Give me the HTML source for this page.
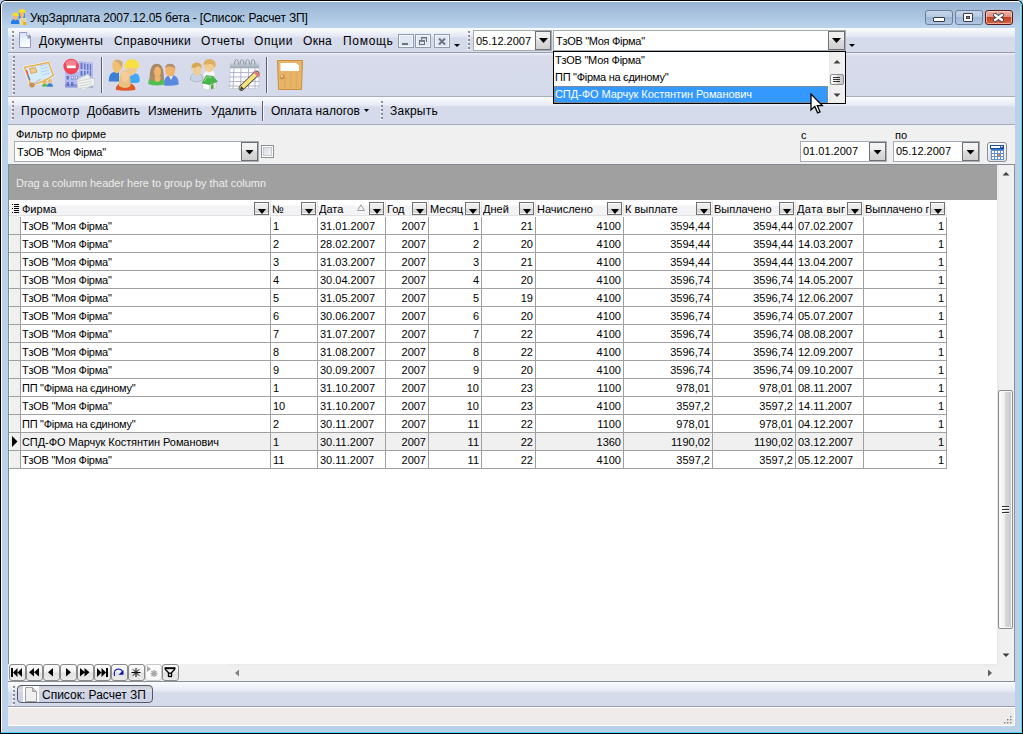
<!DOCTYPE html>
<html><head><meta charset="utf-8">
<style>
*{box-sizing:border-box;margin:0;padding:0}
html,body{width:1023px;height:734px;overflow:hidden}
body{position:relative;background:#b9d1ea;font-family:"Liberation Sans",sans-serif;font-size:11px;color:#000}
.a{position:absolute}
.t{position:absolute;white-space:nowrap;line-height:1}
.m{font-size:12px}
</style></head><body>
<!-- outer frame -->
<div class="a" style="left:0;top:0;width:1023px;height:734px;background:#bad1ea;border-radius:6px 6px 0 0;overflow:hidden"></div>
<div class="a" style="left:2px;top:2px;width:1019px;height:26px;background:linear-gradient(#98b4d4,#bcd4ec)"></div>
<div class="a" style="left:0;top:0;width:1023px;height:734px;border:1px solid #000;border-bottom:none;border-radius:6px 6px 0 0"></div>
<div class="a" style="left:1px;top:1px;width:1021px;height:733px;border:1px solid #fff;border-right:1px solid #48d8f8;border-bottom:none;border-radius:5px 5px 0 0"></div>
<div class="a" style="left:1px;top:732px;width:1021px;height:1px;background:#40d8f8"></div>
<div class="a" style="left:0;top:733px;width:1023px;height:1px;background:#000"></div>
<div class="a" style="left:1020px;top:6px;width:1px;height:726px;background:#c4cee8"></div>
<div class="a" style="left:2px;top:731px;width:1019px;height:1px;background:#c4cee8"></div>
<!-- title -->
<svg class="a" style="left:8px;top:6px" width="22" height="22" viewBox="8 6 22 22">
<path d="M18.5 13.5 Q19 11 21.5 11 Q25 11 25 14 V19 H18.5 Z" fill="#3d8de0"/>
<path d="M19.5 12 Q20 17 22 18.5 Q24.5 17 24.5 12 Z" fill="#f0b878"/>
<path d="M18.5 12.8 Q18.6 9 22 9 Q25.5 9 25.6 13 Q22 11.6 18.5 12.8Z" fill="#f8e020"/>
<path d="M10.8 24 Q10.8 19 15.5 19 Q19.5 19 19.5 24 Z" fill="#1f7ee8"/>
<path d="M13 15.5 Q13.2 19.5 15.5 20.5 Q18 19.5 18.2 15.5 Z" fill="#f2b27a"/>
<path d="M12.4 16 Q12.2 12.6 15.6 12.6 Q19 12.6 19 16.2 Q15.7 14.8 12.4 16Z" fill="#fbe21a"/>
<rect x="20" y="18" width="6" height="7" fill="#eedca0"/>
<path d="M21 20 H25 M21 22 H24" stroke="#c8b070" stroke-width="0.6"/>
<rect x="23" y="22" width="3" height="3" fill="#eab010"/>
</svg>
<div class="t m" style="left:30px;top:12px;color:#000;letter-spacing:-0.14px">УкрЗарплата 2007.12.05 бета - [Список: Расчет ЗП]</div>

<!-- window buttons -->
<div class="a" style="left:925px;top:10px;width:28px;height:15px;border:1px solid #6d7f98;border-radius:3px;background:linear-gradient(#c6d6ea 0%,#b5c9e2 45%,#9fb7d6 50%,#b0c8e4 100%)"></div>
<div class="a" style="left:933px;top:17px;width:12px;height:5px;border:1px solid #3a3a40;border-radius:1px;background:#fff"></div>
<div class="a" style="left:955px;top:10px;width:28px;height:15px;border:1px solid #6d7f98;border-radius:3px;background:linear-gradient(#c6d6ea 0%,#b5c9e2 45%,#9fb7d6 50%,#b0c8e4 100%)"></div>
<div class="a" style="left:963px;top:13px;width:10px;height:9px;border:1px solid #3a3a40;border-radius:1px;background:#fff"></div>
<div class="a" style="left:966px;top:16px;width:4px;height:3px;background:#7a9ac0;border:1px solid #3a3a40"></div>
<div class="a" style="left:985px;top:10px;width:28px;height:15px;border:1px solid #5a1a1a;border-radius:3px;background:linear-gradient(#eeb0a0 0%,#e09080 45%,#c04020 50%,#d86848 100%);box-shadow:inset 0 0 0 1px rgba(255,220,210,0.6)"></div>
<svg class="a" style="left:991px;top:11px" width="15" height="13" viewBox="0 0 15 13"><path d="M4 4 L11 9 M11 4 L4 9" stroke="#3c4150" stroke-width="4" stroke-linecap="round"/><path d="M4 4 L11 9 M11 4 L4 9" stroke="#fafafa" stroke-width="2.3" stroke-linecap="round"/></svg>

<!-- client area background -->
<div class="a" style="left:8px;top:28px;width:1007px;height:698px;background:#f0f0f0"></div>

<!-- menu bar -->
<div class="a" style="left:8px;top:28px;width:1007px;height:24px;background:linear-gradient(#fbfcfe 0px,#e6e9f4 8px,#d6dbec 10px,#d6dbec 24px)"></div>
<div class="a" style="left:8px;top:52px;width:1007px;height:1px;background:#9a9eaa"></div>

<!-- icon toolbar -->
<div class="a" style="left:8px;top:53px;width:1007px;height:44px;background:linear-gradient(#eef0f8 0px,#d7dbec 3px,#d5daeb 44px)"></div>
<div class="a" style="left:8px;top:96px;width:1007px;height:1px;background:#a8adbd"></div>

<!-- text toolbar -->
<div class="a" style="left:8px;top:97px;width:1007px;height:28px;background:linear-gradient(#fbfcfe 0px,#e8ebf5 8px,#d6dbec 10px,#d6dbec 28px)"></div>
<div class="a" style="left:8px;top:124px;width:1007px;height:1px;background:#a8adbd"></div>

<!-- filter panel -->
<div class="a" style="left:8px;top:125px;width:1007px;height:39px;background:#f0f0f0"></div>


<!-- menu bar content -->
<svg class="a" style="left:11px;top:31px" width="3" height="20" viewBox="0 0 3 20"><rect x="1" y="0" width="2" height="2" fill="#8a909a"/><rect x="0" y="2" width="2" height="1" fill="#fff"/><rect x="1" y="4" width="2" height="2" fill="#8a909a"/><rect x="0" y="6" width="2" height="1" fill="#fff"/><rect x="1" y="8" width="2" height="2" fill="#8a909a"/><rect x="0" y="10" width="2" height="1" fill="#fff"/><rect x="1" y="12" width="2" height="2" fill="#8a909a"/><rect x="0" y="14" width="2" height="1" fill="#fff"/><rect x="1" y="16" width="2" height="2" fill="#8a909a"/><rect x="0" y="18" width="2" height="1" fill="#fff"/></svg>
<svg class="a" style="left:18px;top:31px" width="15" height="18" viewBox="0 0 15 18">
<defs><linearGradient id="docg" x1="0" y1="0" x2="0.3" y2="1"><stop offset="0" stop-color="#cfe3fb"/><stop offset="1" stop-color="#ffffff"/></linearGradient></defs>
<path d="M1.5 1.5 H9 L12.5 5 V16.5 H1.5 Z" fill="url(#docg)" stroke="#9a98c0" stroke-width="1"/>
<rect x="9.5" y="5" width="2.6" height="2.5" fill="#90a0a8"/>
<path d="M8.5 1.5 V4.5 H12" fill="#fff" stroke="#9a98c0" stroke-width="0.8"/>
</svg>
<div class="t m" style="left:39px;top:35px;letter-spacing:0.25px">Документы</div>
<div class="t m" style="left:114px;top:35px;letter-spacing:0.4px">Справочники</div>
<div class="t m" style="left:201px;top:35px;letter-spacing:0.4px">Отчеты</div>
<div class="t m" style="left:254px;top:35px;letter-spacing:0.6px">Опции</div>
<div class="t m" style="left:303px;top:35px;letter-spacing:0.3px">Окна</div>
<div class="t m" style="left:343px;top:35px;letter-spacing:0.7px">Помощь</div>
<!-- mdi buttons -->
<div class="a" style="left:398px;top:34px;width:16px;height:14px;border:1px solid #8e9aae;box-shadow:inset 0 0 0 1px #f4f7fc;background:#e0e7f3"></div>
<div class="a" style="left:402px;top:43px;width:6px;height:2px;background:#6e7480"></div>
<div class="a" style="left:415px;top:34px;width:16px;height:14px;border:1px solid #8e9aae;box-shadow:inset 0 0 0 1px #f4f7fc;background:#e0e7f3"></div>
<svg class="a" style="left:415px;top:34px" width="16" height="14" viewBox="0 0 16 14"><rect x="6" y="3" width="6" height="1.5" fill="#6e7480"/><rect x="11" y="3" width="1" height="5" fill="#6e7480"/><rect x="6" y="4" width="1" height="2" fill="#6e7480"/><rect x="4" y="6" width="6" height="1.8" fill="#6e7480"/><rect x="4.5" y="6.5" width="5" height="4" fill="none" stroke="#6e7480" stroke-width="1"/></svg>
<div class="a" style="left:434px;top:34px;width:16px;height:14px;border:1px solid #8e9aae;box-shadow:inset 0 0 0 1px #f4f7fc;background:#e0e7f3"></div>
<svg class="a" style="left:434px;top:34px" width="16" height="14" viewBox="0 0 16 14"><path d="M5 4.5 L11 10.5 M11 4.5 L5 10.5" stroke="#6e7480" stroke-width="2"/></svg>
<svg class="a" style="left:454px;top:44px" width="6" height="3" viewBox="0 0 6 3"><path d="M0 0 H6 L3 3 Z" fill="#000"/></svg>
<svg class="a" style="left:467px;top:31px" width="3" height="20" viewBox="0 0 3 20"><rect x="1" y="0" width="2" height="2" fill="#8a909a"/><rect x="0" y="2" width="2" height="1" fill="#fff"/><rect x="1" y="4" width="2" height="2" fill="#8a909a"/><rect x="0" y="6" width="2" height="1" fill="#fff"/><rect x="1" y="8" width="2" height="2" fill="#8a909a"/><rect x="0" y="10" width="2" height="1" fill="#fff"/><rect x="1" y="12" width="2" height="2" fill="#8a909a"/><rect x="0" y="14" width="2" height="1" fill="#fff"/><rect x="1" y="16" width="2" height="2" fill="#8a909a"/><rect x="0" y="18" width="2" height="1" fill="#fff"/></svg>
<!-- date box -->
<div class="a" style="left:473px;top:30px;width:79px;height:21px;border:1px solid #a5acb5;background:#fff"></div>
<div class="t" style="left:476px;top:36px;font-size:11px">05.12.2007</div>
<div class="a" style="left:535px;top:31px;width:16px;height:19px;border:1px solid #707070;background:linear-gradient(#f2f2f2 0%,#ebebeb 45%,#dddddd 50%,#cfcfcf 100%)"></div>
<svg class="a" style="left:539px;top:38px" width="9" height="5" viewBox="0 0 9 5"><path d="M0 0 H9 L4.5 5 Z" fill="#000"/></svg>
<!-- big combo -->
<div class="a" style="left:553px;top:30px;width:293px;height:21px;border:1px solid #a5acb5;background:#fff"></div>
<div class="t" style="left:556px;top:36px;font-size:11px;letter-spacing:-0.3px">ТзОВ "Моя Фірма"</div>
<div class="a" style="left:828px;top:31px;width:17px;height:19px;border:1px solid #707070;background:linear-gradient(#f2f2f2 0%,#ebebeb 45%,#dddddd 50%,#cfcfcf 100%)"></div>
<svg class="a" style="left:832px;top:38px" width="9" height="5" viewBox="0 0 9 5"><path d="M0 0 H9 L4.5 5 Z" fill="#000"/></svg>
<svg class="a" style="left:849px;top:44px" width="6" height="3" viewBox="0 0 6 3"><path d="M0 0 H6 L3 3 Z" fill="#000"/></svg>


<!-- icon toolbar content -->
<svg class="a" style="left:12px;top:56px" width="3" height="40" viewBox="0 0 3 40"><rect x="1" y="0" width="2" height="2" fill="#8a909a"/><rect x="0" y="2" width="2" height="1" fill="#fff"/><rect x="1" y="4" width="2" height="2" fill="#8a909a"/><rect x="0" y="6" width="2" height="1" fill="#fff"/><rect x="1" y="8" width="2" height="2" fill="#8a909a"/><rect x="0" y="10" width="2" height="1" fill="#fff"/><rect x="1" y="12" width="2" height="2" fill="#8a909a"/><rect x="0" y="14" width="2" height="1" fill="#fff"/><rect x="1" y="16" width="2" height="2" fill="#8a909a"/><rect x="0" y="18" width="2" height="1" fill="#fff"/><rect x="1" y="20" width="2" height="2" fill="#8a909a"/><rect x="0" y="22" width="2" height="1" fill="#fff"/><rect x="1" y="24" width="2" height="2" fill="#8a909a"/><rect x="0" y="26" width="2" height="1" fill="#fff"/><rect x="1" y="28" width="2" height="2" fill="#8a909a"/><rect x="0" y="30" width="2" height="1" fill="#fff"/><rect x="1" y="32" width="2" height="2" fill="#8a909a"/><rect x="0" y="34" width="2" height="1" fill="#fff"/><rect x="1" y="36" width="2" height="2" fill="#8a909a"/><rect x="0" y="38" width="2" height="1" fill="#fff"/></svg>
<svg class="a" style="left:20px;top:57px" width="38" height="36" viewBox="20 57 38 36">
<path d="M24.5 67.3 L39 64.5 L48.6 62.2 L53.4 75.6 L42 81.8 L31 85.6 Z" fill="#fff" stroke="#fff" stroke-width="2.4" stroke-linejoin="round"/>
<path d="M24.5 67.3 L39 64.5 L48.6 62.2 L53.4 75.6 L42 81.8 L31 85.6 Z" fill="#d6ebfb" stroke="#e8b050" stroke-width="1.5" stroke-linejoin="round"/>
<path d="M40 66 L47 64.5 M40.5 69 L48 67 M41 72 L49 70 M42 75 L50 73" stroke="#a8c4ec" stroke-width="0.7"/>
<path d="M29.5 68.5 L35.5 67.5 L37 72 L31 73.5 Z" fill="#f0cc88" stroke="#c89848" stroke-width="0.7"/>
<path d="M26.5 70 L28 75" stroke="#e05050" stroke-width="1.2"/>
<path d="M28 75 L30 80" stroke="#4a80d0" stroke-width="1.2"/>
<path d="M34 84 L40.5 79" stroke="#c4ccd8" stroke-width="2"/>
<ellipse cx="32" cy="85" rx="2.8" ry="2.4" fill="#c89058"/>
<rect x="43" y="79.5" width="3.5" height="5.5" fill="#f0b850"/>
<path d="M42 86.5 Q42 84 44.7 84 Q47.5 84 47.5 86.5 Z" fill="#40c040"/>
<circle cx="50" cy="81" r="1.9" fill="#f0b860"/>
<path d="M47 86.8 Q47 83.2 50 83.2 Q53 83.2 53 86.8 Z" fill="#3a7ed8"/>
</svg>
<svg class="a" style="left:60px;top:56px" width="38" height="37" viewBox="60 56 38 37">
<path d="M65 72 H79 V61 L93 62.5 V87.5 H65 Z" fill="#b4bcf0"/>
<path d="M65 87.5 H93 V84 H65 Z" fill="#8c98d8"/>
<g fill="#6878c8">
<rect x="80.5" y="63" width="2" height="6"/><rect x="84" y="63.5" width="1.6" height="6"/><rect x="87" y="64" width="1.4" height="6"/><rect x="89.8" y="64.3" width="1.3" height="6"/>
<rect x="80.5" y="71" width="2" height="5"/><rect x="84" y="71" width="1.6" height="5"/><rect x="87" y="71" width="1.4" height="5"/><rect x="89.8" y="71" width="1.3" height="5"/>
<rect x="66.5" y="76" width="2.5" height="3.5"/><rect x="71" y="76" width="2.5" height="3.5"/><rect x="75" y="76" width="2.5" height="3.5"/>
<rect x="66.5" y="82" width="2.5" height="4"/><rect x="71" y="82" width="2.5" height="4"/>
</g>
<rect x="71.5" y="76.5" width="1.5" height="2" fill="#fff"/><rect x="75.5" y="76.5" width="1.5" height="2" fill="#fff"/>
<path d="M76.5 80 L88 74 L94 84.5 L82.5 90.5 Z" fill="#eceeee" stroke="#c8ccc8" stroke-width="0.6"/>
<path d="M77 81.5 L94 78 L94.5 85.5 L78 88.5 Z" fill="#f2f4f2" stroke="#c0c4c0" stroke-width="0.6"/>
<path d="M79 83.5 L92 81 M79.5 86 L92 83.5" stroke="#b8bcb8" stroke-width="0.6"/>
<circle cx="71.2" cy="66.6" r="7.8" fill="#ee4858"/>
<ellipse cx="71.2" cy="63.5" rx="5.5" ry="3.8" fill="#f89aa2" opacity="0.7"/>
<rect x="66.8" y="65.6" width="9" height="2.6" fill="#fff"/>
</svg>
<div class="a" style="left:101px;top:57px;width:1px;height:36px;background:#5a6070;box-shadow:1px 0 0 #f4f6fb"></div>
<svg class="a" style="left:104px;top:56px" width="40" height="37" viewBox="104 56 40 37">
<path d="M108.7 81.5 Q108.5 72 115.5 71.7 L119 72.5 V81.5 Z" fill="#3a80d8"/>
<path d="M112.3 65 Q112.3 71.5 116.5 73.5 Q122.8 70 122.8 65 Q122.8 59.4 117.5 59.4 Q112.3 59.4 112.3 65Z" fill="#f0c070"/>
<path d="M114 61 Q118 58.5 122.5 62 L121.5 68 Q120 62 114 61Z" fill="#c8a878"/>
<path d="M129 83 Q129 73.5 134.5 73.2 Q139.8 73.5 139.8 80 Q139.8 83 136 83 Z" fill="#40a8f8"/>
<path d="M126 67 Q127 74 131.5 75.6 Q136.5 74 137.5 67 Z" fill="#f0c888"/>
<path d="M124.6 68.7 Q124 59.2 132 59.2 Q139.5 59.2 139.3 67.5 L136 68 Q131 66.5 124.6 68.7Z" fill="#f8e040"/>
<path d="M115.8 90 Q115.5 82.5 125.5 82.5 Q135.4 82.5 135.4 90 Q125.5 91.5 115.8 90Z" fill="#e05a28"/>
<path d="M119 86 Q118.5 70.2 124.8 70.2 Q131 70.2 130.5 86 L128 87.5 L125 88 L122 87.5 Z" fill="#e8c080"/>
<path d="M120.8 75 Q121 81 125 82 Q129 81 129 75 Q129 71.5 125 71.5 Q120.8 71.5 120.8 75Z" fill="#f8cc98"/>
</svg>
<svg class="a" style="left:146px;top:57px" width="36" height="36" viewBox="146 57 36 36">
<path d="M164 85.5 Q163.5 75 171 75 Q179 75 178.8 84.5 Q171 86.5 164 85.5Z" fill="#5a8ae0"/>
<path d="M169 76 L171 80 L173 76 Z" fill="#f4f4f8"/>
<ellipse cx="170.2" cy="70.3" rx="4.9" ry="6.3" fill="#f0b46c"/>
<path d="M165.2 68.5 Q165 63.8 170 63.8 Q175.5 63.8 175.2 69.5 Q173.5 65.8 168 66.5 Q166 67 165.2 68.5Z" fill="#b09070"/>
<path d="M148.4 84 Q148 77.5 152 77.2 L157.5 80 L163.5 77.2 Q164.5 78 164.2 84.5 Q156 86.8 148.4 84Z" fill="#50c050"/>
<path d="M149.8 80.5 Q148.8 63.7 156.8 63.7 Q164.5 63.7 163.8 80 L157 80.5 Z" fill="#a88a6a"/>
<ellipse cx="157.5" cy="71.8" rx="3.5" ry="5.3" fill="#f0b46c"/>
<path d="M154.5 76.5 H160.8 L160 81 L157.5 82 L155 81 Z" fill="#f0b46c"/>
</svg>
<svg class="a" style="left:186px;top:56px" width="36" height="36" viewBox="186 56 36 36">
<path d="M190.5 80 Q190 73 196.5 73 Q203 73 202.5 80 Q196.5 83.5 190.5 80Z" fill="#c8d4e4" stroke="#a0a8b8" stroke-width="0.6"/>
<path d="M192.5 67.5 Q192.5 74.5 197.5 76 Q201.5 73 201.5 67 Z" fill="#f2cc90"/>
<path d="M191.5 69 Q191 62.5 196.8 62.5 Q202 62.5 201.8 68.5 Q199 64.5 195 68 Q193.5 66.5 191.5 69Z" fill="#d8a850"/>
<path d="M202.8 76 Q203.5 70 209.5 70 Q215.5 70 215.8 75.5 Q209 78 202.8 76Z" fill="#f8f8f8" stroke="#c8ccd4" stroke-width="0.6"/>
<path d="M204 64 Q204 71.5 209.5 72.5 Q214.5 70.5 214.5 64 Z" fill="#f2cc90"/>
<path d="M203.3 65.5 Q203.3 59 209.5 59 Q215.8 59 215.8 65.5 L214.5 68 Q213 62.5 207 64.5 Q205 63.5 203.3 65.5Z" fill="#dcb060"/>
<path d="M203 83 L209.5 84.5 V90 L203 88.5 Z" fill="#fbfbfb" stroke="#c8c8c8" stroke-width="0.5"/>
<path d="M209.5 84.5 L216.5 81.5 V87.5 L209.5 90 Z" fill="#e6e6e6" stroke="#c0c0c0" stroke-width="0.5"/>
<path d="M211 85 L213.5 84 V88.5 L211 89.3 Z" fill="#40b040"/>
<path d="M202 83 L206.5 75.5 L213 76.5 L217.5 81.5 L209.5 84.5 Z" fill="#48b848" stroke="#309030" stroke-width="0.5"/>
<path d="M204 81.5 L207 76.8 L211.5 77.5" stroke="#90e090" stroke-width="1" fill="none"/>
</svg>
<svg class="a" style="left:224px;top:56px" width="40" height="36" viewBox="224 56 40 36">
<defs><linearGradient id="calh" x1="0" y1="0" x2="0" y2="1"><stop offset="0" stop-color="#d0d8e0"/><stop offset="1" stop-color="#9aa8b4"/></linearGradient>
<linearGradient id="pen" x1="0" y1="0" x2="1" y2="1"><stop offset="0" stop-color="#fff8b0"/><stop offset="1" stop-color="#f0d040"/></linearGradient></defs>
<path d="M230 63 H259 V86 L257 88.5 H228.5 L230 86 Z" fill="#fafcfd" stroke="#c0c8d0" stroke-width="0.7"/>
<rect x="230" y="62.5" width="29" height="5.8" fill="url(#calh)"/>
<path d="M234.5 64.5 Q234.5 59.5 236.5 59.5 Q238.5 59.5 238.5 64.5 M240 64.5 Q240 59.5 242 59.5 Q244 59.5 244 64.5 M245.5 64.5 Q245.5 59.5 247.5 59.5 Q249.5 59.5 249.5 64.5 M251 64.5 Q251 59.5 253 59.5 Q255 59.5 255 64.5" stroke="#8c949c" stroke-width="1" fill="none"/>
<path d="M230 72.5 H259 M229.5 77 H259 M229 81.5 H259 M228.5 86 H259 M234 68.3 L233 88.5 M241 68.3 L240.5 88.5 M248.5 68.3 L248.5 88.5 M255 68.3 V88.5" stroke="#a8a4c4" stroke-width="0.8"/>
<path d="M241.5 88 L256.5 73.5" stroke="#404040" stroke-width="5.6" stroke-linecap="round"/>
<path d="M241.5 88 L256.5 73.5" stroke="url(#pen)" stroke-width="4" stroke-linecap="round"/>
<path d="M255 72 L258.5 75.5" stroke="#e07080" stroke-width="2.5" stroke-linecap="round"/>
<path d="M240 90 L241 86 L244 89 Z" fill="#303030"/>
</svg>
<div class="a" style="left:266px;top:57px;width:1px;height:36px;background:#5a6070;box-shadow:1px 0 0 #f4f6fb"></div>
<svg class="a" style="left:274px;top:57px" width="32" height="36" viewBox="274 57 32 36">
<path d="M277.5 60.5 H302.5 L301.5 89.5 H278.5 Z" fill="#e8b468" stroke="#c89040" stroke-width="1"/>
<path d="M285 72 V88 M291 72 V88 M297 72 V88" stroke="#d8a050" stroke-width="0.6"/>
<path d="M280.5 63 H296 L299 65.5 V71 H280.5 Z" fill="#fdfeff"/>
<circle cx="282.3" cy="77" r="2.5" fill="#d09048"/>
<circle cx="281.8" cy="76.3" r="1" fill="#f8e0c0"/>
</svg>

<!-- text toolbar content -->
<svg class="a" style="left:11px;top:101px" width="3" height="20" viewBox="0 0 3 20"><rect x="1" y="0" width="2" height="2" fill="#8a909a"/><rect x="0" y="2" width="2" height="1" fill="#fff"/><rect x="1" y="4" width="2" height="2" fill="#8a909a"/><rect x="0" y="6" width="2" height="1" fill="#fff"/><rect x="1" y="8" width="2" height="2" fill="#8a909a"/><rect x="0" y="10" width="2" height="1" fill="#fff"/><rect x="1" y="12" width="2" height="2" fill="#8a909a"/><rect x="0" y="14" width="2" height="1" fill="#fff"/><rect x="1" y="16" width="2" height="2" fill="#8a909a"/><rect x="0" y="18" width="2" height="1" fill="#fff"/></svg>
<div class="t m" style="left:21px;top:105px;letter-spacing:0.5px">Просмотр</div>
<div class="t m" style="left:87px;top:105px">Добавить</div>
<div class="t m" style="left:148px;top:105px">Изменить</div>
<div class="t m" style="left:211px;top:105px">Удалить</div>
<div class="a" style="left:262px;top:101px;width:1px;height:20px;background:#5a6070;box-shadow:1px 0 0 #f4f6fb"></div>
<div class="t m" style="left:271px;top:105px">Оплата налогов</div>
<svg class="a" style="left:364px;top:109px" width="5" height="3" viewBox="0 0 5 3"><path d="M0 0 H5 L2.5 3 Z" fill="#000"/></svg>
<svg class="a" style="left:380px;top:101px" width="3" height="20" viewBox="0 0 3 20"><rect x="1" y="0" width="2" height="2" fill="#8a909a"/><rect x="0" y="2" width="2" height="1" fill="#fff"/><rect x="1" y="4" width="2" height="2" fill="#8a909a"/><rect x="0" y="6" width="2" height="1" fill="#fff"/><rect x="1" y="8" width="2" height="2" fill="#8a909a"/><rect x="0" y="10" width="2" height="1" fill="#fff"/><rect x="1" y="12" width="2" height="2" fill="#8a909a"/><rect x="0" y="14" width="2" height="1" fill="#fff"/><rect x="1" y="16" width="2" height="2" fill="#8a909a"/><rect x="0" y="18" width="2" height="1" fill="#fff"/></svg>
<div class="t m" style="left:390px;top:105px;letter-spacing:0.25px">Закрыть</div>

<!-- filter panel content -->
<div class="t" style="left:16px;top:129px">Фильтр по фирме</div>
<div class="a" style="left:14px;top:141px;width:245px;height:21px;border:1px solid #a5acb5;background:#fff"></div>
<div class="t" style="left:17px;top:147px;letter-spacing:-0.3px">ТзОВ "Моя Фірма"</div>
<div class="a" style="left:241px;top:142px;width:17px;height:19px;border:1px solid #707070;background:linear-gradient(#f6f6f6 0%,#ececec 45%,#dcdcdc 50%,#d0d0d0 100%)"></div>
<svg class="a" style="left:245px;top:150px" width="9" height="5" viewBox="0 0 9 5"><path d="M0.5 0 H8.5 L4.5 4.5 Z" fill="#000"/></svg>
<div class="a" style="left:261px;top:145px;width:13px;height:13px;border:1px solid #8f8f8f;background:#fff"></div>
<div class="a" style="left:263px;top:147px;width:9px;height:9px;border:1px solid #c4c8cc;background:linear-gradient(135deg,#d8dce4,#f4f4f6)"></div>

<div class="t" style="left:801px;top:130px">с</div>
<div class="a" style="left:800px;top:141px;width:87px;height:21px;border:1px solid #a5acb5;background:#fff"></div>
<div class="t" style="left:803px;top:146px">01.01.2007</div>
<div class="a" style="left:869px;top:142px;width:17px;height:19px;border:1px solid #707070;background:linear-gradient(#f6f6f6 0%,#ececec 45%,#dcdcdc 50%,#d0d0d0 100%)"></div>
<svg class="a" style="left:873px;top:150px" width="9" height="5" viewBox="0 0 9 5"><path d="M0.5 0 H8.5 L4.5 4.5 Z" fill="#000"/></svg>
<div class="t" style="left:895px;top:130px">по</div>
<div class="a" style="left:893px;top:141px;width:87px;height:21px;border:1px solid #a5acb5;background:#fff"></div>
<div class="t" style="left:896px;top:146px">05.12.2007</div>
<div class="a" style="left:962px;top:142px;width:17px;height:19px;border:1px solid #707070;background:linear-gradient(#f6f6f6 0%,#ececec 45%,#dcdcdc 50%,#d0d0d0 100%)"></div>
<svg class="a" style="left:966px;top:150px" width="9" height="5" viewBox="0 0 9 5"><path d="M0.5 0 H8.5 L4.5 4.5 Z" fill="#000"/></svg>
<div class="a" style="left:987px;top:142px;width:20px;height:20px;border:1px solid #8a8f98;border-radius:3px;background:linear-gradient(#fbfbfb,#dfe2e8)"></div>
<svg class="a" style="left:987px;top:142px" width="20" height="20" viewBox="0 0 20 20">
<rect x="3" y="7" width="2" height="10" fill="#d4d4d4"/>
<rect x="4" y="7" width="13" height="11" fill="#6890c8"/>
<rect x="4" y="7" width="13" height="1" fill="#3070e0"/>
<rect x="3" y="3" width="14" height="4" fill="#1e4e94"/>
<rect x="4" y="4" width="9" height="2" fill="#fff"/>
<path d="M13.5 4 H16 L14.75 5.6 Z" fill="#fff"/>
<rect x="5" y="9" width="2" height="2" fill="#fff"/><rect x="8" y="9" width="2" height="2" fill="#fff"/><rect x="11" y="9" width="2" height="2" fill="#fff"/><rect x="14" y="9" width="2" height="2" fill="#fff"/><rect x="5" y="12" width="2" height="2" fill="#fff"/><rect x="8" y="12" width="2" height="2" fill="#fff"/><rect x="11" y="12" width="2" height="2" fill="#f07840"/><rect x="14" y="12" width="2" height="2" fill="#fff"/><rect x="5" y="15" width="2" height="2" fill="#fff"/><rect x="8" y="15" width="2" height="2" fill="#fff"/><rect x="11" y="15" width="2" height="2" fill="#fff"/><rect x="14" y="15" width="2" height="2" fill="#fff"/>
</svg>

<!-- GRID -->
<div class="a" style="left:8px;top:164px;width:989px;height:36px;background:#a0a0a0;border-top:1px solid #868b93;border-left:1px solid #868b93"></div>
<div class="t" style="left:16px;top:178px;color:#ececec;letter-spacing:-0.04px">Drag a column header here to group by that column</div>
<div class="a" style="left:8px;top:200px;width:989px;height:464px;background:#fff;border-left:1px solid #868b93"></div>
<div class="a" style="left:9px;top:200px;width:938px;height:16px;background:linear-gradient(#fff 0,#fff 5px,#f3f3f5 6px,#f3f3f5 15px,#e2e2e2 15px)"></div>
<svg class="a" style="left:12px;top:204px" width="7" height="10" viewBox="0 0 7 10"><path d="M0 0.5H1M0 4.5H1M0 8.5H1M2 0.5H7M2 2.5H7M2 4.5H7M2 6.5H7M2 8.5H7" stroke="#000" stroke-width="1"/></svg>
<div class="t" style="left:22px;top:204px;width:231px;overflow:hidden;letter-spacing:0px">Фирма</div>
<div class="a" style="left:254px;top:202px;width:15px;height:13px;border:1px solid #707070;background:linear-gradient(#fff 0,#fff 1px,#ececec 1px,#ececec 5px,#d8d8d8 6px,#d8d8d8 10px,#fff 10px)"></div>
<svg class="a" style="left:258px;top:209px" width="8" height="5" viewBox="0 0 8 5"><path d="M0 0 H8 L4 5 Z" fill="#000"/></svg>
<div class="a" style="left:270px;top:201px;width:1px;height:14px;background:#e6e6e6"></div>
<div class="t" style="left:272px;top:204px;width:28px;overflow:hidden;letter-spacing:0px">№</div>
<div class="a" style="left:301px;top:202px;width:15px;height:13px;border:1px solid #707070;background:linear-gradient(#fff 0,#fff 1px,#ececec 1px,#ececec 5px,#d8d8d8 6px,#d8d8d8 10px,#fff 10px)"></div>
<svg class="a" style="left:305px;top:209px" width="8" height="5" viewBox="0 0 8 5"><path d="M0 0 H8 L4 5 Z" fill="#000"/></svg>
<div class="a" style="left:317px;top:201px;width:1px;height:14px;background:#e6e6e6"></div>
<div class="t" style="left:319px;top:204px;width:49px;overflow:hidden;letter-spacing:0px">Дата</div>
<div class="a" style="left:369px;top:202px;width:15px;height:13px;border:1px solid #707070;background:linear-gradient(#fff 0,#fff 1px,#ececec 1px,#ececec 5px,#d8d8d8 6px,#d8d8d8 10px,#fff 10px)"></div>
<svg class="a" style="left:373px;top:209px" width="8" height="5" viewBox="0 0 8 5"><path d="M0 0 H8 L4 5 Z" fill="#000"/></svg>
<div class="a" style="left:385px;top:201px;width:1px;height:14px;background:#e6e6e6"></div>
<div class="t" style="left:387px;top:204px;width:24px;overflow:hidden;letter-spacing:0px">Год</div>
<div class="a" style="left:412px;top:202px;width:15px;height:13px;border:1px solid #707070;background:linear-gradient(#fff 0,#fff 1px,#ececec 1px,#ececec 5px,#d8d8d8 6px,#d8d8d8 10px,#fff 10px)"></div>
<svg class="a" style="left:416px;top:209px" width="8" height="5" viewBox="0 0 8 5"><path d="M0 0 H8 L4 5 Z" fill="#000"/></svg>
<div class="a" style="left:428px;top:201px;width:1px;height:14px;background:#e6e6e6"></div>
<div class="t" style="left:430px;top:204px;width:34px;overflow:hidden;letter-spacing:0px">Месяц</div>
<div class="a" style="left:465px;top:202px;width:15px;height:13px;border:1px solid #707070;background:linear-gradient(#fff 0,#fff 1px,#ececec 1px,#ececec 5px,#d8d8d8 6px,#d8d8d8 10px,#fff 10px)"></div>
<svg class="a" style="left:469px;top:209px" width="8" height="5" viewBox="0 0 8 5"><path d="M0 0 H8 L4 5 Z" fill="#000"/></svg>
<div class="a" style="left:481px;top:201px;width:1px;height:14px;background:#e6e6e6"></div>
<div class="t" style="left:483px;top:204px;width:35px;overflow:hidden;letter-spacing:0px">Дней</div>
<div class="a" style="left:519px;top:202px;width:15px;height:13px;border:1px solid #707070;background:linear-gradient(#fff 0,#fff 1px,#ececec 1px,#ececec 5px,#d8d8d8 6px,#d8d8d8 10px,#fff 10px)"></div>
<svg class="a" style="left:523px;top:209px" width="8" height="5" viewBox="0 0 8 5"><path d="M0 0 H8 L4 5 Z" fill="#000"/></svg>
<div class="a" style="left:535px;top:201px;width:1px;height:14px;background:#e6e6e6"></div>
<div class="t" style="left:537px;top:204px;width:69px;overflow:hidden;letter-spacing:0px">Начислено</div>
<div class="a" style="left:607px;top:202px;width:15px;height:13px;border:1px solid #707070;background:linear-gradient(#fff 0,#fff 1px,#ececec 1px,#ececec 5px,#d8d8d8 6px,#d8d8d8 10px,#fff 10px)"></div>
<svg class="a" style="left:611px;top:209px" width="8" height="5" viewBox="0 0 8 5"><path d="M0 0 H8 L4 5 Z" fill="#000"/></svg>
<div class="a" style="left:623px;top:201px;width:1px;height:14px;background:#e6e6e6"></div>
<div class="t" style="left:625px;top:204px;width:70px;overflow:hidden;letter-spacing:0px">К выплате</div>
<div class="a" style="left:696px;top:202px;width:15px;height:13px;border:1px solid #707070;background:linear-gradient(#fff 0,#fff 1px,#ececec 1px,#ececec 5px,#d8d8d8 6px,#d8d8d8 10px,#fff 10px)"></div>
<svg class="a" style="left:700px;top:209px" width="8" height="5" viewBox="0 0 8 5"><path d="M0 0 H8 L4 5 Z" fill="#000"/></svg>
<div class="a" style="left:712px;top:201px;width:1px;height:14px;background:#e6e6e6"></div>
<div class="t" style="left:714px;top:204px;width:64px;overflow:hidden;letter-spacing:0px">Выплачено</div>
<div class="a" style="left:779px;top:202px;width:15px;height:13px;border:1px solid #707070;background:linear-gradient(#fff 0,#fff 1px,#ececec 1px,#ececec 5px,#d8d8d8 6px,#d8d8d8 10px,#fff 10px)"></div>
<svg class="a" style="left:783px;top:209px" width="8" height="5" viewBox="0 0 8 5"><path d="M0 0 H8 L4 5 Z" fill="#000"/></svg>
<div class="a" style="left:795px;top:201px;width:1px;height:14px;background:#e6e6e6"></div>
<div class="t" style="left:797px;top:204px;width:48px;overflow:hidden;letter-spacing:0.4px">Дата выплаты</div>
<div class="a" style="left:847px;top:202px;width:15px;height:13px;border:1px solid #707070;background:linear-gradient(#fff 0,#fff 1px,#ececec 1px,#ececec 5px,#d8d8d8 6px,#d8d8d8 10px,#fff 10px)"></div>
<svg class="a" style="left:851px;top:209px" width="8" height="5" viewBox="0 0 8 5"><path d="M0 0 H8 L4 5 Z" fill="#000"/></svg>
<div class="a" style="left:863px;top:201px;width:1px;height:14px;background:#e6e6e6"></div>
<div class="t" style="left:865px;top:204px;width:64px;overflow:hidden;letter-spacing:0px">Выплачено грн</div>
<div class="a" style="left:930px;top:202px;width:15px;height:13px;border:1px solid #707070;background:linear-gradient(#fff 0,#fff 1px,#ececec 1px,#ececec 5px,#d8d8d8 6px,#d8d8d8 10px,#fff 10px)"></div>
<svg class="a" style="left:934px;top:209px" width="8" height="5" viewBox="0 0 8 5"><path d="M0 0 H8 L4 5 Z" fill="#000"/></svg>
<svg class="a" style="left:357px;top:204px" width="8" height="7" viewBox="0 0 8 7"><path d="M4 0.8 L7.5 6.5 H0.5 Z" fill="none" stroke="#a0a0a0" stroke-width="1"/></svg>
<div class="a" style="left:10px;top:216px;width:10px;height:252px;background:#f0f0f0"></div>
<div class="a" style="left:21px;top:433px;width:925px;height:17px;background:#f0f0f0"></div>
<svg class="a" style="left:12px;top:436px" width="6" height="11" viewBox="0 0 6 11"><path d="M0 0 L5.5 5.5 L0 11 Z" fill="#000"/></svg>
<div class="a" style="left:9px;top:234px;width:938px;height:1px;background:#a0a0a0"></div>
<div class="a" style="left:9px;top:252px;width:938px;height:1px;background:#a0a0a0"></div>
<div class="a" style="left:9px;top:270px;width:938px;height:1px;background:#a0a0a0"></div>
<div class="a" style="left:9px;top:288px;width:938px;height:1px;background:#a0a0a0"></div>
<div class="a" style="left:9px;top:306px;width:938px;height:1px;background:#a0a0a0"></div>
<div class="a" style="left:9px;top:324px;width:938px;height:1px;background:#a0a0a0"></div>
<div class="a" style="left:9px;top:342px;width:938px;height:1px;background:#a0a0a0"></div>
<div class="a" style="left:9px;top:360px;width:938px;height:1px;background:#a0a0a0"></div>
<div class="a" style="left:9px;top:378px;width:938px;height:1px;background:#a0a0a0"></div>
<div class="a" style="left:9px;top:396px;width:938px;height:1px;background:#a0a0a0"></div>
<div class="a" style="left:9px;top:414px;width:938px;height:1px;background:#a0a0a0"></div>
<div class="a" style="left:9px;top:432px;width:938px;height:1px;background:#a0a0a0"></div>
<div class="a" style="left:9px;top:450px;width:938px;height:1px;background:#a0a0a0"></div>
<div class="a" style="left:9px;top:468px;width:938px;height:1px;background:#a0a0a0"></div>
<div class="a" style="left:20px;top:217px;width:1px;height:252px;background:#a0a0a0"></div>
<div class="a" style="left:270px;top:217px;width:1px;height:252px;background:#a0a0a0"></div>
<div class="a" style="left:317px;top:217px;width:1px;height:252px;background:#a0a0a0"></div>
<div class="a" style="left:385px;top:217px;width:1px;height:252px;background:#a0a0a0"></div>
<div class="a" style="left:428px;top:217px;width:1px;height:252px;background:#a0a0a0"></div>
<div class="a" style="left:481px;top:217px;width:1px;height:252px;background:#a0a0a0"></div>
<div class="a" style="left:535px;top:217px;width:1px;height:252px;background:#a0a0a0"></div>
<div class="a" style="left:623px;top:217px;width:1px;height:252px;background:#a0a0a0"></div>
<div class="a" style="left:712px;top:217px;width:1px;height:252px;background:#a0a0a0"></div>
<div class="a" style="left:795px;top:217px;width:1px;height:252px;background:#a0a0a0"></div>
<div class="a" style="left:863px;top:217px;width:1px;height:252px;background:#a0a0a0"></div>
<div class="a" style="left:946px;top:217px;width:1px;height:252px;background:#a0a0a0"></div>
<div class="t" style="left:22px;top:221px;letter-spacing:-0.25px">ТзОВ "Моя Фірма"</div>
<div class="t" style="left:273px;top:221px;letter-spacing:0px">1</div>
<div class="t" style="left:320px;top:221px;letter-spacing:0px">31.01.2007</div>
<div class="t" style="left:386px;top:221px;width:40px;text-align:right">2007</div>
<div class="t" style="left:429px;top:221px;width:50px;text-align:right">1</div>
<div class="t" style="left:482px;top:221px;width:51px;text-align:right">21</div>
<div class="t" style="left:536px;top:221px;width:85px;text-align:right">4100</div>
<div class="t" style="left:624px;top:221px;width:86px;text-align:right">3594,44</div>
<div class="t" style="left:713px;top:221px;width:80px;text-align:right">3594,44</div>
<div class="t" style="left:798px;top:221px;letter-spacing:0px">07.02.2007</div>
<div class="t" style="left:864px;top:221px;width:80px;text-align:right">1</div>
<div class="t" style="left:22px;top:239px;letter-spacing:-0.25px">ТзОВ "Моя Фірма"</div>
<div class="t" style="left:273px;top:239px;letter-spacing:0px">2</div>
<div class="t" style="left:320px;top:239px;letter-spacing:0px">28.02.2007</div>
<div class="t" style="left:386px;top:239px;width:40px;text-align:right">2007</div>
<div class="t" style="left:429px;top:239px;width:50px;text-align:right">2</div>
<div class="t" style="left:482px;top:239px;width:51px;text-align:right">20</div>
<div class="t" style="left:536px;top:239px;width:85px;text-align:right">4100</div>
<div class="t" style="left:624px;top:239px;width:86px;text-align:right">3594,44</div>
<div class="t" style="left:713px;top:239px;width:80px;text-align:right">3594,44</div>
<div class="t" style="left:798px;top:239px;letter-spacing:0px">14.03.2007</div>
<div class="t" style="left:864px;top:239px;width:80px;text-align:right">1</div>
<div class="t" style="left:22px;top:257px;letter-spacing:-0.25px">ТзОВ "Моя Фірма"</div>
<div class="t" style="left:273px;top:257px;letter-spacing:0px">3</div>
<div class="t" style="left:320px;top:257px;letter-spacing:0px">31.03.2007</div>
<div class="t" style="left:386px;top:257px;width:40px;text-align:right">2007</div>
<div class="t" style="left:429px;top:257px;width:50px;text-align:right">3</div>
<div class="t" style="left:482px;top:257px;width:51px;text-align:right">21</div>
<div class="t" style="left:536px;top:257px;width:85px;text-align:right">4100</div>
<div class="t" style="left:624px;top:257px;width:86px;text-align:right">3594,44</div>
<div class="t" style="left:713px;top:257px;width:80px;text-align:right">3594,44</div>
<div class="t" style="left:798px;top:257px;letter-spacing:0px">13.04.2007</div>
<div class="t" style="left:864px;top:257px;width:80px;text-align:right">1</div>
<div class="t" style="left:22px;top:275px;letter-spacing:-0.25px">ТзОВ "Моя Фірма"</div>
<div class="t" style="left:273px;top:275px;letter-spacing:0px">4</div>
<div class="t" style="left:320px;top:275px;letter-spacing:0px">30.04.2007</div>
<div class="t" style="left:386px;top:275px;width:40px;text-align:right">2007</div>
<div class="t" style="left:429px;top:275px;width:50px;text-align:right">4</div>
<div class="t" style="left:482px;top:275px;width:51px;text-align:right">20</div>
<div class="t" style="left:536px;top:275px;width:85px;text-align:right">4100</div>
<div class="t" style="left:624px;top:275px;width:86px;text-align:right">3596,74</div>
<div class="t" style="left:713px;top:275px;width:80px;text-align:right">3596,74</div>
<div class="t" style="left:798px;top:275px;letter-spacing:0px">14.05.2007</div>
<div class="t" style="left:864px;top:275px;width:80px;text-align:right">1</div>
<div class="t" style="left:22px;top:293px;letter-spacing:-0.25px">ТзОВ "Моя Фірма"</div>
<div class="t" style="left:273px;top:293px;letter-spacing:0px">5</div>
<div class="t" style="left:320px;top:293px;letter-spacing:0px">31.05.2007</div>
<div class="t" style="left:386px;top:293px;width:40px;text-align:right">2007</div>
<div class="t" style="left:429px;top:293px;width:50px;text-align:right">5</div>
<div class="t" style="left:482px;top:293px;width:51px;text-align:right">19</div>
<div class="t" style="left:536px;top:293px;width:85px;text-align:right">4100</div>
<div class="t" style="left:624px;top:293px;width:86px;text-align:right">3596,74</div>
<div class="t" style="left:713px;top:293px;width:80px;text-align:right">3596,74</div>
<div class="t" style="left:798px;top:293px;letter-spacing:0px">12.06.2007</div>
<div class="t" style="left:864px;top:293px;width:80px;text-align:right">1</div>
<div class="t" style="left:22px;top:311px;letter-spacing:-0.25px">ТзОВ "Моя Фірма"</div>
<div class="t" style="left:273px;top:311px;letter-spacing:0px">6</div>
<div class="t" style="left:320px;top:311px;letter-spacing:0px">30.06.2007</div>
<div class="t" style="left:386px;top:311px;width:40px;text-align:right">2007</div>
<div class="t" style="left:429px;top:311px;width:50px;text-align:right">6</div>
<div class="t" style="left:482px;top:311px;width:51px;text-align:right">20</div>
<div class="t" style="left:536px;top:311px;width:85px;text-align:right">4100</div>
<div class="t" style="left:624px;top:311px;width:86px;text-align:right">3596,74</div>
<div class="t" style="left:713px;top:311px;width:80px;text-align:right">3596,74</div>
<div class="t" style="left:798px;top:311px;letter-spacing:0px">05.07.2007</div>
<div class="t" style="left:864px;top:311px;width:80px;text-align:right">1</div>
<div class="t" style="left:22px;top:329px;letter-spacing:-0.25px">ТзОВ "Моя Фірма"</div>
<div class="t" style="left:273px;top:329px;letter-spacing:0px">7</div>
<div class="t" style="left:320px;top:329px;letter-spacing:0px">31.07.2007</div>
<div class="t" style="left:386px;top:329px;width:40px;text-align:right">2007</div>
<div class="t" style="left:429px;top:329px;width:50px;text-align:right">7</div>
<div class="t" style="left:482px;top:329px;width:51px;text-align:right">22</div>
<div class="t" style="left:536px;top:329px;width:85px;text-align:right">4100</div>
<div class="t" style="left:624px;top:329px;width:86px;text-align:right">3596,74</div>
<div class="t" style="left:713px;top:329px;width:80px;text-align:right">3596,74</div>
<div class="t" style="left:798px;top:329px;letter-spacing:0px">08.08.2007</div>
<div class="t" style="left:864px;top:329px;width:80px;text-align:right">1</div>
<div class="t" style="left:22px;top:347px;letter-spacing:-0.25px">ТзОВ "Моя Фірма"</div>
<div class="t" style="left:273px;top:347px;letter-spacing:0px">8</div>
<div class="t" style="left:320px;top:347px;letter-spacing:0px">31.08.2007</div>
<div class="t" style="left:386px;top:347px;width:40px;text-align:right">2007</div>
<div class="t" style="left:429px;top:347px;width:50px;text-align:right">8</div>
<div class="t" style="left:482px;top:347px;width:51px;text-align:right">22</div>
<div class="t" style="left:536px;top:347px;width:85px;text-align:right">4100</div>
<div class="t" style="left:624px;top:347px;width:86px;text-align:right">3596,74</div>
<div class="t" style="left:713px;top:347px;width:80px;text-align:right">3596,74</div>
<div class="t" style="left:798px;top:347px;letter-spacing:0px">12.09.2007</div>
<div class="t" style="left:864px;top:347px;width:80px;text-align:right">1</div>
<div class="t" style="left:22px;top:365px;letter-spacing:-0.25px">ТзОВ "Моя Фірма"</div>
<div class="t" style="left:273px;top:365px;letter-spacing:0px">9</div>
<div class="t" style="left:320px;top:365px;letter-spacing:0px">30.09.2007</div>
<div class="t" style="left:386px;top:365px;width:40px;text-align:right">2007</div>
<div class="t" style="left:429px;top:365px;width:50px;text-align:right">9</div>
<div class="t" style="left:482px;top:365px;width:51px;text-align:right">20</div>
<div class="t" style="left:536px;top:365px;width:85px;text-align:right">4100</div>
<div class="t" style="left:624px;top:365px;width:86px;text-align:right">3596,74</div>
<div class="t" style="left:713px;top:365px;width:80px;text-align:right">3596,74</div>
<div class="t" style="left:798px;top:365px;letter-spacing:0px">09.10.2007</div>
<div class="t" style="left:864px;top:365px;width:80px;text-align:right">1</div>
<div class="t" style="left:22px;top:383px;letter-spacing:-0.28px">ПП "Фірма на єдиному"</div>
<div class="t" style="left:273px;top:383px;letter-spacing:0px">1</div>
<div class="t" style="left:320px;top:383px;letter-spacing:0px">31.10.2007</div>
<div class="t" style="left:386px;top:383px;width:40px;text-align:right">2007</div>
<div class="t" style="left:429px;top:383px;width:50px;text-align:right">10</div>
<div class="t" style="left:482px;top:383px;width:51px;text-align:right">23</div>
<div class="t" style="left:536px;top:383px;width:85px;text-align:right">1100</div>
<div class="t" style="left:624px;top:383px;width:86px;text-align:right">978,01</div>
<div class="t" style="left:713px;top:383px;width:80px;text-align:right">978,01</div>
<div class="t" style="left:798px;top:383px;letter-spacing:0px">08.11.2007</div>
<div class="t" style="left:864px;top:383px;width:80px;text-align:right">1</div>
<div class="t" style="left:22px;top:401px;letter-spacing:-0.25px">ТзОВ "Моя Фірма"</div>
<div class="t" style="left:273px;top:401px;letter-spacing:0px">10</div>
<div class="t" style="left:320px;top:401px;letter-spacing:0px">31.10.2007</div>
<div class="t" style="left:386px;top:401px;width:40px;text-align:right">2007</div>
<div class="t" style="left:429px;top:401px;width:50px;text-align:right">10</div>
<div class="t" style="left:482px;top:401px;width:51px;text-align:right">23</div>
<div class="t" style="left:536px;top:401px;width:85px;text-align:right">4100</div>
<div class="t" style="left:624px;top:401px;width:86px;text-align:right">3597,2</div>
<div class="t" style="left:713px;top:401px;width:80px;text-align:right">3597,2</div>
<div class="t" style="left:798px;top:401px;letter-spacing:0px">14.11.2007</div>
<div class="t" style="left:864px;top:401px;width:80px;text-align:right">1</div>
<div class="t" style="left:22px;top:419px;letter-spacing:-0.28px">ПП "Фірма на єдиному"</div>
<div class="t" style="left:273px;top:419px;letter-spacing:0px">2</div>
<div class="t" style="left:320px;top:419px;letter-spacing:0px">30.11.2007</div>
<div class="t" style="left:386px;top:419px;width:40px;text-align:right">2007</div>
<div class="t" style="left:429px;top:419px;width:50px;text-align:right">11</div>
<div class="t" style="left:482px;top:419px;width:51px;text-align:right">22</div>
<div class="t" style="left:536px;top:419px;width:85px;text-align:right">1100</div>
<div class="t" style="left:624px;top:419px;width:86px;text-align:right">978,01</div>
<div class="t" style="left:713px;top:419px;width:80px;text-align:right">978,01</div>
<div class="t" style="left:798px;top:419px;letter-spacing:0px">04.12.2007</div>
<div class="t" style="left:864px;top:419px;width:80px;text-align:right">1</div>
<div class="t" style="left:22px;top:437px;letter-spacing:-0.07px">СПД-ФО Марчук Костянтин Романович</div>
<div class="t" style="left:273px;top:437px;letter-spacing:0px">1</div>
<div class="t" style="left:320px;top:437px;letter-spacing:0px">30.11.2007</div>
<div class="t" style="left:386px;top:437px;width:40px;text-align:right">2007</div>
<div class="t" style="left:429px;top:437px;width:50px;text-align:right">11</div>
<div class="t" style="left:482px;top:437px;width:51px;text-align:right">22</div>
<div class="t" style="left:536px;top:437px;width:85px;text-align:right">1360</div>
<div class="t" style="left:624px;top:437px;width:86px;text-align:right">1190,02</div>
<div class="t" style="left:713px;top:437px;width:80px;text-align:right">1190,02</div>
<div class="t" style="left:798px;top:437px;letter-spacing:0px">03.12.2007</div>
<div class="t" style="left:864px;top:437px;width:80px;text-align:right">1</div>
<div class="t" style="left:22px;top:455px;letter-spacing:-0.25px">ТзОВ "Моя Фірма"</div>
<div class="t" style="left:273px;top:455px;letter-spacing:0px">11</div>
<div class="t" style="left:320px;top:455px;letter-spacing:0px">30.11.2007</div>
<div class="t" style="left:386px;top:455px;width:40px;text-align:right">2007</div>
<div class="t" style="left:429px;top:455px;width:50px;text-align:right">11</div>
<div class="t" style="left:482px;top:455px;width:51px;text-align:right">22</div>
<div class="t" style="left:536px;top:455px;width:85px;text-align:right">4100</div>
<div class="t" style="left:624px;top:455px;width:86px;text-align:right">3597,2</div>
<div class="t" style="left:713px;top:455px;width:80px;text-align:right">3597,2</div>
<div class="t" style="left:798px;top:455px;letter-spacing:0px">05.12.2007</div>
<div class="t" style="left:864px;top:455px;width:80px;text-align:right">1</div>
<!-- /GRID -->

<!-- vertical scrollbar -->
<div class="a" style="left:997px;top:164px;width:17px;height:500px;background:linear-gradient(90deg,#e6e6e6 0,#f0f0f0 3px,#f0f0f0 100%)"></div>
<svg class="a" style="left:1002px;top:171px" width="8" height="5" viewBox="0 0 8 5"><path d="M0.5 4.5 L4 1 L7.5 4.5 Z" fill="#404040"/></svg>
<div class="a" style="left:998px;top:390px;width:15px;height:239px;border:1px solid #8c8c8c;border-radius:2px;background:linear-gradient(90deg,#fdfdfd 0,#eeeeee 45%,#d8d8dc 50%,#c8c8cc 100%);box-shadow:inset 0 0 0 1px #f8f8f8"></div>
<div class="a" style="left:1002px;top:506px;width:7px;height:1px;background:#303030;box-shadow:0 3px 0 #303030,0 6px 0 #303030,0 1px 0 #fff,0 4px 0 #fff,0 7px 0 #fff"></div>
<svg class="a" style="left:1002px;top:653px" width="8" height="5" viewBox="0 0 8 5"><path d="M0.5 0.5 L4 4 L7.5 0.5 Z" fill="#404040"/></svg>
<div class="a" style="left:1014px;top:164px;width:1px;height:518px;background:#8a909a"></div>
<div class="a" style="left:997px;top:164px;width:18px;height:1px;background:#868b93"></div>

<!-- nav bar -->
<div class="a" style="left:9px;top:664px;width:220px;height:17px;background:#f0f0f0"></div>
<div class="a" style="left:229px;top:664px;width:785px;height:17px;background:linear-gradient(#e8e8e8 0,#f0f0f0 3px,#f0f0f0 100%)"></div>
<div class="a" style="left:997px;top:664px;width:17px;height:17px;background:#f0f0f0"></div>
<svg class="a" style="left:234px;top:669px" width="6" height="8" viewBox="0 0 6 8"><path d="M5 0.5 L1 4 L5 7.5 Z" fill="#808080"/></svg>
<svg class="a" style="left:987px;top:669px" width="6" height="8" viewBox="0 0 6 8"><path d="M1 0.5 L5 4 L1 7.5 Z" fill="#606060"/></svg>
<div class="a" style="left:8px;top:681px;width:1007px;height:1px;background:#8a909a"></div>
<div class="a" style="left:9px;top:664px;width:17px;height:17px;border:1px solid #8a8a8a;border-radius:3px;background:linear-gradient(#fdfdfd,#f2f2f2 45%,#e2e2e2 55%,#eaeaea)"></div>
<svg class="a" style="left:9px;top:664px" width="16" height="16" viewBox="0 0 16 16"><rect x="2" y="4" width="2" height="9" fill="#000"/><path d="M4 8.5 L8.5 4 V13 Z M8.5 8.5 L13 4 V13 Z" fill="#000"/></svg>
<div class="a" style="left:26px;top:664px;width:17px;height:17px;border:1px solid #8a8a8a;border-radius:3px;background:linear-gradient(#fdfdfd,#f2f2f2 45%,#e2e2e2 55%,#eaeaea)"></div>
<svg class="a" style="left:26px;top:664px" width="16" height="16" viewBox="0 0 16 16"><path d="M3 8.2 L8 4 V12.5 Z M8 8.2 L13 4 V12.5 Z" fill="#000"/></svg>
<div class="a" style="left:43px;top:664px;width:17px;height:17px;border:1px solid #8a8a8a;border-radius:3px;background:linear-gradient(#fdfdfd,#f2f2f2 45%,#e2e2e2 55%,#eaeaea)"></div>
<svg class="a" style="left:43px;top:664px" width="16" height="16" viewBox="0 0 16 16"><path d="M5 8.2 L10 4 V12.5 Z" fill="#000"/></svg>
<div class="a" style="left:60px;top:664px;width:17px;height:17px;border:1px solid #8a8a8a;border-radius:3px;background:linear-gradient(#fdfdfd,#f2f2f2 45%,#e2e2e2 55%,#eaeaea)"></div>
<svg class="a" style="left:60px;top:664px" width="16" height="16" viewBox="0 0 16 16"><path d="M6 4 L11 8.2 L6 12.5 Z" fill="#000"/></svg>
<div class="a" style="left:77px;top:664px;width:17px;height:17px;border:1px solid #8a8a8a;border-radius:3px;background:linear-gradient(#fdfdfd,#f2f2f2 45%,#e2e2e2 55%,#eaeaea)"></div>
<svg class="a" style="left:77px;top:664px" width="16" height="16" viewBox="0 0 16 16"><path d="M3 4 L8 8.2 L3 12.5 Z M7.5 4 L12.5 8.2 L7.5 12.5 Z" fill="#000"/></svg>
<div class="a" style="left:94px;top:664px;width:17px;height:17px;border:1px solid #8a8a8a;border-radius:3px;background:linear-gradient(#fdfdfd,#f2f2f2 45%,#e2e2e2 55%,#eaeaea)"></div>
<svg class="a" style="left:94px;top:664px" width="16" height="16" viewBox="0 0 16 16"><path d="M3 4 L7.5 8.5 L3 13 Z M7.5 4 L12 8.5 L7.5 13 Z" fill="#000"/><rect x="12" y="4" width="2" height="9" fill="#000"/></svg>
<div class="a" style="left:111px;top:664px;width:17px;height:17px;border:1px solid #8a8a8a;border-radius:3px;background:linear-gradient(#fdfdfd,#f2f2f2 45%,#e2e2e2 55%,#eaeaea)"></div>
<svg class="a" style="left:111px;top:664px" width="16" height="16" viewBox="0 0 16 16"><path d="M3.5 12 Q2.2 5.2 7.5 5 Q10.5 5 11.5 7.8" stroke="#0818a8" stroke-width="1.1" fill="none"/><path d="M12.5 6 V10.8 H7.5 Z" fill="#0818a8"/></svg>
<div class="a" style="left:128px;top:664px;width:17px;height:17px;border:1px solid #8a8a8a;border-radius:3px;background:linear-gradient(#fdfdfd,#f2f2f2 45%,#e2e2e2 55%,#eaeaea)"></div>
<svg class="a" style="left:128px;top:664px" width="16" height="16" viewBox="0 0 16 16"><path d="M8 4 V13 M3.5 8.5 H12.5 M4.8 5.3 L11.2 11.7 M11.2 5.3 L4.8 11.7" stroke="#000" stroke-width="1"/><rect x="7.5" y="7.7" width="1" height="1" fill="#3050d0"/></svg>
<div class="a" style="left:145px;top:664px;width:17px;height:17px;border:1px solid #c8c8c8;border-radius:3px;background:linear-gradient(#fdfdfd,#f6f6f6)"></div>
<svg class="a" style="left:145px;top:664px" width="16" height="16" viewBox="0 0 16 16"><path d="M9 6 V13 M5.5 9.5 H12.5 M6.5 7 L11.5 12 M11.5 7 L6.5 12" stroke="#a8a8a8" stroke-width="1.4"/><path d="M2 2 L6 5 L2 8 Z" fill="#a8a8a8"/></svg>
<div class="a" style="left:162px;top:664px;width:17px;height:17px;border:1px solid #8a8a8a;border-radius:3px;background:linear-gradient(#fdfdfd,#f2f2f2 45%,#e2e2e2 55%,#eaeaea)"></div>
<svg class="a" style="left:162px;top:664px" width="16" height="16" viewBox="0 0 16 16"><path d="M2.5 4.2 H13.5" stroke="#000" stroke-width="2"/><path d="M3 5 L6.8 9 M13 5 L9.2 9" stroke="#000" stroke-width="1.3"/><rect x="6.5" y="9.2" width="3" height="3.3" fill="none" stroke="#000" stroke-width="1.3"/></svg>
<!-- tab bar -->
<div class="a" style="left:8px;top:682px;width:1007px;height:24px;background:linear-gradient(#fbfcfe 0px,#e4e8f3 9px,#d6dbec 11px,#d6dbec 24px)"></div>
<div class="a" style="left:8px;top:706px;width:1007px;height:1px;background:#9a9eaa"></div>
<svg class="a" style="left:12px;top:686px" width="3" height="20" viewBox="0 0 3 20"><rect x="1" y="0" width="2" height="2" fill="#8a909a"/><rect x="0" y="2" width="2" height="1" fill="#fff"/><rect x="1" y="4" width="2" height="2" fill="#8a909a"/><rect x="0" y="6" width="2" height="1" fill="#fff"/><rect x="1" y="8" width="2" height="2" fill="#8a909a"/><rect x="0" y="10" width="2" height="1" fill="#fff"/><rect x="1" y="12" width="2" height="2" fill="#8a909a"/><rect x="0" y="14" width="2" height="1" fill="#fff"/><rect x="1" y="16" width="2" height="2" fill="#8a909a"/><rect x="0" y="18" width="2" height="1" fill="#fff"/></svg>
<div class="a" style="left:17px;top:685px;width:136px;height:18px;border:1px solid #555a66;border-radius:4px;background:linear-gradient(#c8ccd8 0,#dde0ea 5px,#d0d5e6 6px,#ccd2e4 100%)"></div>
<div class="a" style="left:23px;top:686px;width:16px;height:16px;background:#fff"></div>
<svg class="a" style="left:24px;top:686px" width="14" height="17" viewBox="0 0 14 17">
<path d="M1.5 1.5 H8.5 L12.5 5.5 V15.5 H1.5 Z" fill="#f0f0f0" stroke="#a0a0a0" stroke-width="1"/>
<path d="M8.5 1.5 V5.5 H12.5" fill="#c8c8c8" stroke="#a0a0a0" stroke-width="1"/>
</svg>
<div class="t m" style="left:42px;top:689px">Список: Расчет ЗП</div>

<!-- status bar -->
<div class="a" style="left:8px;top:707px;width:1007px;height:19px;background:#efebea;border-top:1px solid #fff;border-bottom:1px solid #fff;border-right:1px solid #fff"></div>
<svg class="a" style="left:1003px;top:715px" width="10" height="10" viewBox="0 0 10 10">
<g fill="#fff"><rect x="8" y="2" width="1" height="1"/><rect x="5" y="5" width="1" height="1"/><rect x="8" y="5" width="1" height="1"/><rect x="2" y="8" width="1" height="1"/><rect x="5" y="8" width="1" height="1"/><rect x="8" y="8" width="1" height="1"/></g>
<g fill="#808080"><rect x="7" y="1" width="1.5" height="1.5"/><rect x="4" y="4" width="1.5" height="1.5"/><rect x="7" y="4" width="1.5" height="1.5"/><rect x="1" y="7" width="1.5" height="1.5"/><rect x="4" y="7" width="1.5" height="1.5"/><rect x="7" y="7" width="1.5" height="1.5"/></g>
</svg>

<!-- dropdown list -->
<div class="a" style="left:553px;top:51px;width:293px;height:53px;border:1px solid #000;background:#fff"></div>
<div class="t" style="left:555px;top:55px;letter-spacing:-0.25px">ТзОВ "Моя Фірма"</div>
<div class="t" style="left:555px;top:72px;letter-spacing:-0.28px">ПП "Фірма на єдиному"</div>
<div class="a" style="left:554px;top:86px;width:274px;height:17px;background:#3399ff;border:1px dotted #c08040"></div>
<div class="t" style="left:555px;top:89px;color:#fff;letter-spacing:-0.07px">СПД-ФО Марчук Костянтин Романович</div>
<div class="a" style="left:829px;top:52px;width:16px;height:51px;background:linear-gradient(90deg,#e8e8e8 0,#f0f0f0 3px)"></div>
<svg class="a" style="left:833px;top:59px" width="8" height="5" viewBox="0 0 8 5"><path d="M0.5 4.5 L4 1 L7.5 4.5 Z" fill="#404040"/></svg>
<div class="a" style="left:830px;top:74px;width:14px;height:11px;border:1px solid #8c8c8c;border-radius:2px;background:linear-gradient(90deg,#fdfdfd,#eee 45%,#d8d8dc 50%,#c8c8cc)"></div>
<div class="a" style="left:833px;top:77px;width:7px;height:1px;background:#303030;box-shadow:0 2px 0 #303030,0 4px 0 #303030"></div>
<svg class="a" style="left:833px;top:93px" width="8" height="5" viewBox="0 0 8 5"><path d="M0.5 0.5 L4 4 L7.5 0.5 Z" fill="#404040"/></svg>

<!-- cursor -->
<svg class="a" style="left:810px;top:93px" width="14" height="22" viewBox="0 0 14 22">
<path d="M1 1 V17 L4.8 13.4 L7.6 19.8 L10 18.8 L7.3 12.6 H12.3 Z" fill="#fff" stroke="#000" stroke-width="1.3" stroke-linejoin="miter"/>
</svg>

</body></html>
